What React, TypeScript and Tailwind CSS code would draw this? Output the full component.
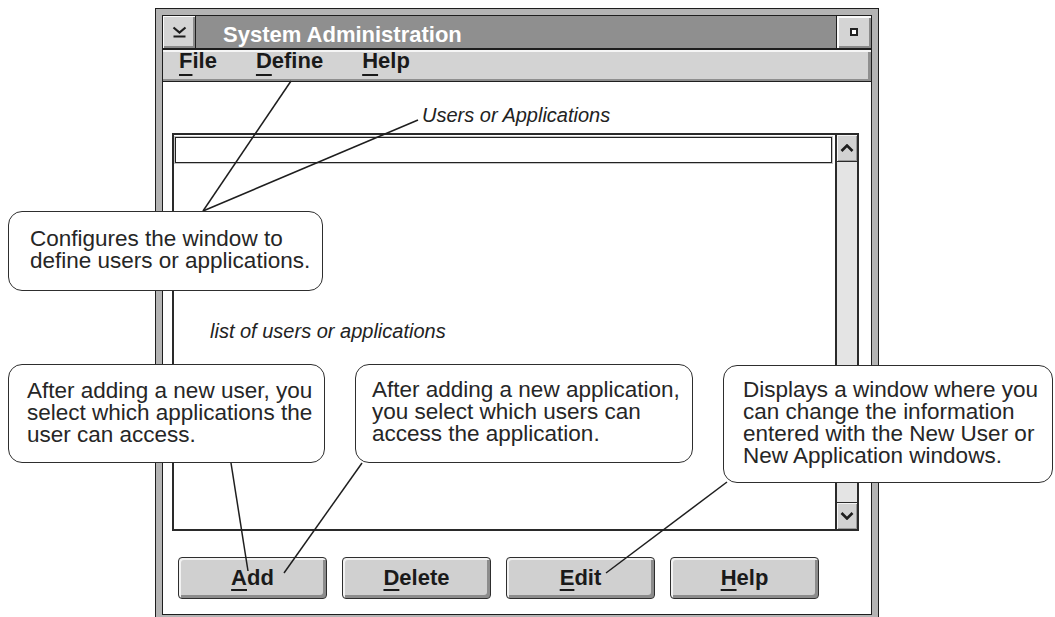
import React from 'react';

function Mnemonic({ text, offset }: { text: string; offset: string }) {
  return (
    <span>
      <span className={`underline decoration-[2px] ${offset}`}>{text[0]}</span>
      {text.slice(1)}
    </span>
  );
}

function Callout({ className, lines }: { className: string; lines: string[] }) {
  return (
    <div
      className={`absolute rounded-[14px] border-[1.5px] border-[#2e2e2e] bg-white text-[22.5px] leading-[22px] text-[#262626] ${className}`}
    >
      {lines.map((l) => (
        <div key={l} className="whitespace-nowrap">
          {l}
        </div>
      ))}
    </div>
  );
}

function Chevron({ up }: { up?: boolean }) {
  return (
    <svg width="14" height="8" viewBox="0 0 14 8">
      <polyline
        points={up ? '1.5,7 7,1.5 12.5,7' : '1.5,1 7,6.5 12.5,1'}
        fill="none"
        stroke="#1e1e1e"
        strokeWidth="2.6"
      />
    </svg>
  );
}

export default function App() {
  return (
    <div className="relative h-[617px] w-[1055px] overflow-hidden bg-white font-['Liberation_Sans',Arial,sans-serif]">
      {/* window */}
      <div className="pl-[155px] pt-[8px]">
        <div className="h-[614px] w-[724px] border border-[#1e1e1e] bg-[#b4b4b4] p-[6px]">
          <div className="flex h-full flex-col border border-[#1e1e1e] bg-white">
            {/* title bar */}
            <div className="flex h-[34px] shrink-0 border-b-2 border-[#1e1e1e] bg-[#8f8f8f]">
              <div className="flex w-[33px] items-center justify-center border-r border-[#1e1e1e] bg-[#d4d4d4] shadow-[inset_1px_1px_0_#fafafa,inset_-2px_-2px_0_#8a8a8a]">
                <svg width="15" height="12" viewBox="0 0 15 12">
                  <polyline points="1.5,1.5 7.5,6.5 13.5,1.5" fill="none" stroke="#1e1e1e" strokeWidth="2.2" />
                  <line x1="1.5" y1="10.5" x2="13.5" y2="10.5" stroke="#1e1e1e" strokeWidth="2" />
                </svg>
              </div>
              <div className="flex-1 pl-[27px] pt-[8px] text-[22px] font-bold leading-[22px] text-white">
                System Administration
              </div>
              <div className="flex w-[35px] items-center justify-center border-l border-[#1e1e1e] bg-[#d4d4d4] shadow-[inset_2px_2px_0_#fafafa,inset_-2px_-2px_0_#8a8a8a]">
                <div className="h-[8px] w-[8px] border-2 border-[#222] bg-white" />
              </div>
            </div>

            {/* menu bar */}
            <div className="flex h-[32px] shrink-0 gap-[39px] border-b border-[#1e1e1e] bg-[#d3d3d3] pl-[16px] text-[22px] font-bold leading-[22px] text-[#1a1a1a] shadow-[inset_0_2px_0_#f6f6f6,inset_-3px_-2px_0_#8f8f8f]">
              <Mnemonic text="File" offset="underline-offset-[6px]" />
              <Mnemonic text="Define" offset="underline-offset-[6px]" />
              <Mnemonic text="Help" offset="underline-offset-[6px]" />
            </div>

            {/* client area */}
            <div className="flex flex-1 flex-col">
              <div className="h-[51px] shrink-0 pl-[259px] pt-[21px] text-[20px] italic leading-[24px] text-[#222]">
                Users or Applications
              </div>

              <div className="ml-[9px] flex h-[398px] w-[687px] border-2 border-[#2a2a2a]">
                <div className="flex flex-1 flex-col">
                  <div className="ml-[1px] mr-[3px] mt-[2px] h-[26px] border border-[#222] shadow-[0_0_0_1px_#c4c4c4]" />
                  <div className="mt-[156px] pl-[36px] text-[20px] italic leading-[24px] text-[#222]">
                    list of users or applications
                  </div>
                </div>
                <div className="flex w-[22px] flex-col justify-between border-l-2 border-[#2a2a2a] bg-[#e4e4e4]">
                  <div className="flex h-[27px] items-center justify-center border-b border-[#2a2a2a] bg-[#d2d2d2] shadow-[inset_1px_1px_0_#f4f4f4,inset_-1px_-1px_0_#999]">
                    <Chevron up />
                  </div>
                  <div className="flex h-[27px] items-center justify-center border-t border-[#2a2a2a] bg-[#d2d2d2] shadow-[inset_1px_1px_0_#f4f4f4,inset_-1px_-1px_0_#999]">
                    <Chevron />
                  </div>
                </div>
              </div>

              <div className="mt-[26px] flex gap-[15px] pl-[15px]">
                {['Add', 'Delete', 'Edit', 'Help'].map((b) => (
                  <div
                    key={b}
                    className="flex h-[42px] w-[149px] items-center justify-center rounded-[4px] border border-[#2e2e2e] bg-[#d0d0d0] text-[22px] font-bold leading-[22px] text-[#1a1a1a] shadow-[inset_2px_2px_0_#f2f2f2,inset_-3px_-3px_0_#8c8c8c]"
                  >
                    <Mnemonic text={b} offset="underline-offset-[4px]" />
                  </div>
                ))}
              </div>
            </div>
          </div>
        </div>
      </div>

      {/* leader lines */}
      <svg className="pointer-events-none absolute left-0 top-0" width="1055" height="617">
        <g stroke="#1e1e1e" strokeWidth="1.5" fill="none">
          <line x1="291" y1="81" x2="203" y2="211" />
          <line x1="418" y1="120" x2="203" y2="211" />
          <line x1="231" y1="463" x2="248" y2="571" />
          <line x1="362" y1="463" x2="284" y2="573" />
          <line x1="727" y1="482" x2="606" y2="573" />
        </g>
      </svg>

      {/* callouts */}
      <Callout
        className="left-[8px] top-[211px] h-[80px] w-[315px] pl-[21px] pt-[16px]"
        lines={['Configures the window to', 'define users or applications.']}
      />
      <Callout
        className="left-[8px] top-[364px] h-[99px] w-[317px] pl-[18px] pt-[15px]"
        lines={['After adding a new user, you', 'select which applications the', 'user can access.']}
      />
      <Callout
        className="left-[355px] top-[364px] h-[99px] w-[338px] pl-[16px] pt-[14px]"
        lines={['After adding a new application,', 'you select which users can', 'access the application.']}
      />
      <Callout
        className="left-[723px] top-[365px] h-[118px] w-[330px] pl-[19px] pt-[13px]"
        lines={[
          'Displays a window where you',
          'can change the information',
          'entered with the New User or',
          'New Application windows.',
        ]}
      />
    </div>
  );
}
